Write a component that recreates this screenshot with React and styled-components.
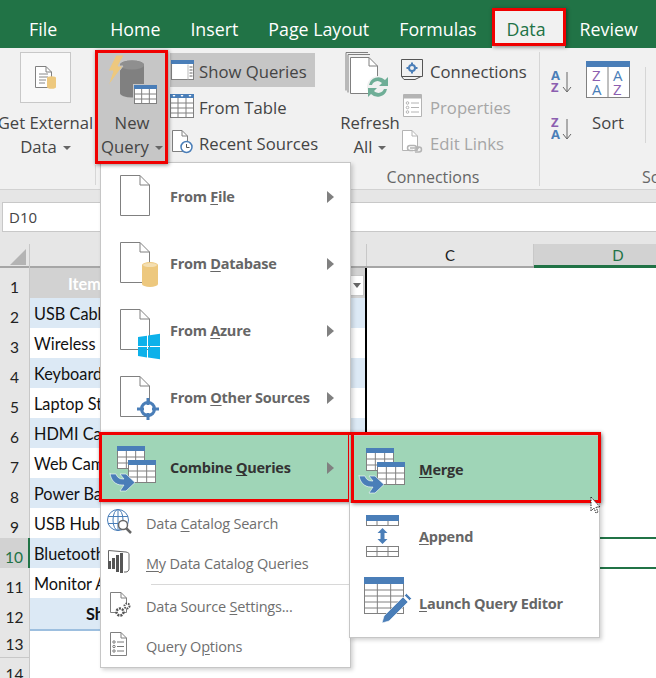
import React from "react";
import styled, { createGlobalStyle, css } from "styled-components";

const Global = createGlobalStyle`
  html, body { margin: 0; padding: 0; background: #fff; }
  #root { width: 656px; height: 678px; overflow: hidden; }
`;
const FONT = `"Open Sans", "Noto Sans", "Liberation Sans", sans-serif`;
const CELLFONT = `"Lato", "Open Sans", "Liberation Sans", sans-serif`;
const RED = "#f00000";

const redFrame = css`
  &::after {
    content: "";
    position: absolute;
    border: 3.5px solid ${RED};
    box-shadow: 1px 1px 4px rgba(0, 0, 0, 0.45);
    pointer-events: none;
    z-index: 5;
  }
`;

const Page = styled.div`
  position: relative; width: 656px; height: 678px; overflow: hidden;
  font-family: ${FONT}; background: #fff;
`;
const TabBar = styled.div`
  height: 48px; background: #217346; display: flex; align-items: flex-end; padding-left: 14px;
`;
const Tab = styled.div`
  position: relative; height: 39px; padding: 0 15px; box-sizing: border-box;
  display: flex; align-items: center; white-space: nowrap;
  font-size: 17.8px; color: #fff; margin-right: ${p => p.$gap || 0}px;
  ${p => p.$active && css`
    padding-right: 19px;
    background: #f1f1f1; color: #217346;
    ${redFrame}
    &::after { left: 0; right: -1px; top: -1px; bottom: 2px; }
  `}
`;
const Ribbon = styled.div`
  height: 141px; background: #f1f1f1; border-bottom: 1px solid #d2d2d2;
  display: flex; overflow: hidden;
`;
const Group = styled.div`
  width: ${p => p.$w}px; flex: none; display: flex; flex-direction: column; padding-top: 4px; box-sizing: border-box;
`;
const GroupBody = styled.div`
  height: 114px; display: flex; padding-left: ${p => p.$pad || 0}px;
`;
const GroupLabel = styled.div`
  height: 22px; line-height: 22px; font-size: 16px; color: #666; white-space: nowrap;
  text-align: ${p => (p.$left ? "left" : "center")};
  padding-left: ${p => p.$left || 0}px; padding-right: ${p => p.$right || 0}px;
`;
const VRule = styled.div`
  width: 1px; flex: none; background: #d6d6d6; align-self: stretch; margin: ${p => p.$m};
`;
const BigButton = styled.div`
  width: ${p => p.$w}px; flex: none; height: 110px; display: flex; flex-direction: column; align-items: center;
  color: #444; font-size: 16.7px; position: relative;
  ${p => p.$pressed && css`
    background: #c6c6c6;
    ${redFrame}
    &::after { left: -3px; right: -2px; top: -2px; bottom: -2px; }
  `}
`;
const IconBox = styled.div`
  height: 59px; box-sizing: border-box; padding-top: ${p => p.$top || 0}px; flex: none;
  display: flex; align-items: flex-start; justify-content: center; width: 100%;
`;
const OutlineBox = styled.div`
  width: 51px; height: 51px; box-sizing: border-box; background: #f8f8f8; border: 1px solid #c8c8c8;
  display: flex; align-items: center; justify-content: center;
`;
const BigLine = styled.div`
  height: 24px; line-height: 24px; white-space: nowrap; display: flex; align-items: center; gap: 6px;
`;
const Caret = styled.span`
  width: 0; height: 0; border-left: 4px solid transparent; border-right: 4px solid transparent;
  border-top: 4px solid #666; margin-top: 2px;
`;
const SmallColumn = styled.div`
  display: flex; flex-direction: column; margin-left: ${p => p.$ml || 0}px; width: ${p => p.$w}px; flex: none;
`;
const SmallButton = styled.div`
  height: 34px; margin: 1px 0; display: flex; align-items: center; gap: 5px; white-space: nowrap;
  font-size: 16.7px; color: ${p => (p.$disabled ? "#a6a6a6" : "#444")};
  background: ${p => (p.$on ? "#c6c6c6" : "transparent")};
`;
const SmallIcon = styled.div`
  width: 24px; height: 26px; flex: none; display: flex; align-items: center; justify-content: center;
`;
const SmallLabel = styled.span`padding-top: 2px;`;
const SortColumn = styled.div`
  width: 35px; flex: none; display: flex; flex-direction: column; gap: 21px; padding-top: 17px;
`;
const FormulaBar = styled.div`
  height: 54px; box-sizing: border-box; background: #e6e6e6; padding: 12px 0 12px 2px;
`;
const NameBox = styled.div`
  height: 30px; box-sizing: border-box; background: #fff; border: 1px solid #c8c8c8; border-right: 0;
  line-height: 28px; padding-left: 6px; font-size: 15px; color: #444;
`;
const ColHeads = styled.div`
  display: grid; grid-template-columns: 30px 337px 167px 169px; height: 24px; background: #e6e6e6;
  box-sizing: border-box; border-bottom: 2px solid #a6a6a6;
`;
const Corner = styled.div`
  position: relative; border-right: 1px solid #c8c8c8;
  &::after { content: ""; position: absolute; right: 3px; bottom: 3px; width: 0; height: 0;
    border-left: 16px solid transparent; border-bottom: 16px solid #b4b4b4; }
`;
const ColHead = styled.div`
  display: flex; align-items: center; justify-content: center; font-size: 15px; font-family: ${CELLFONT};
  color: ${p => (p.$on ? "#217346" : "#222")}; border-right: 1px solid #c8c8c8; box-sizing: border-box; height: ${p => (p.$on ? 24 : 22)}px;
  ${p => p.$on && css`background: #d2d2d2; border-bottom: 3px solid #217346;`}
`;
const Row = styled.div`
  display: grid; grid-template-columns: 30px 337px 167px 169px; height: 30px;
`;
const RowHead = styled.div`
  box-sizing: border-box; border-bottom: 1px solid #c8c8c8; background: ${p => (p.$on ? "#d2d2d2" : "#e6e6e6")};
  border-right: ${p => (p.$on ? "2px solid #217346" : "1px solid #c8c8c8")};
  color: ${p => (p.$on ? "#217346" : "#222")}; display: flex; align-items: flex-end; justify-content: center;
  font-family: ${CELLFONT}; font-size: 15.5px; padding-bottom: 4px;
`;
const Cell = styled.div`
  position: relative; box-sizing: border-box; font-family: ${CELLFONT}; font-size: 16.3px; color: #111;
  padding: 1px 4px 0; line-height: 30px; white-space: nowrap;
  background: ${p => (p.$fill === "head" ? "#d2d2d2" : p.$fill ? "#dce9f5" : "#fff")};
  border-bottom: 2px solid ${p => (p.$plain ? "#9dbfdf" : "#000")};
  border-right: 2px solid #000;
  ${p => p.$head && css`color: #fff; font-weight: 700; padding-left: 38px;`}
  ${p => p.$total && css`font-weight: 700; padding-left: 56px;`}
`;
const FilterBtn = styled.div`
  position: absolute; right: 1px; top: 7px; width: 15px; height: 21px; box-sizing: border-box;
  background: #fff; border: 1px solid #c8c8c8; display: flex; align-items: center; justify-content: center;
  &::after { content: ""; border-left: 4px solid transparent; border-right: 4px solid transparent; border-top: 5px solid #666; }
`;
const EmptyCell = styled.div`
  box-sizing: border-box;
  ${p => p.$selected && css`border-top: 2px solid #217346; border-bottom: 2px solid #217346; margin: -1px 0; height: 32px;`}
`;
const Menu = styled.div`
  position: absolute; left: ${p => p.$x}px; top: ${p => p.$y}px; width: ${p => p.$w}px; z-index: 3;
  box-sizing: border-box; background: #fff; border: 1px solid #c6c6c6; padding: ${p => p.$pad};
  box-shadow: 2px 2px 4px rgba(0, 0, 0, 0.18); color: #666;
`;
const BigItem = styled.div`
  position: relative; height: 67px; display: flex; align-items: center; padding-left: 14px;
  font-size: 14.5px; font-weight: 700; white-space: nowrap; letter-spacing: -0.25px;
  ${p => p.$gapped && css`margin: 3px 0 2px;`}
  svg { flex: none; margin-right: 5px; overflow: visible; }
  ${p => p.$hot && css`
    color: #333; background: #9fd5b7;
    ${redFrame}
    &::after { ${p.$frame} }
  `}
`;
const SmallItem = styled.div`
  height: 40px; display: flex; align-items: center; padding-left: 6px;
  font-size: 14.5px; white-space: nowrap; color: #6f6f6f; letter-spacing: -0.2px;
`;
const SmallSlot = styled.div`
  width: 39px; height: 32px; flex: none; display: flex; align-items: center; padding-bottom: 2px; box-sizing: border-box;
`;
const MenuRule = styled.div`
  height: 1px; margin: 1px 0 1px 50px; background: #d8d8d8;
`;
const Key = styled.span`text-decoration: underline; text-underline-offset: 2px;`;
const Arrow = styled.span`
  position: absolute; right: 16px; top: 50%; margin-top: -6px; width: 0; height: 0;
  border-top: 6px solid transparent; border-bottom: 6px solid transparent; border-left: 7px solid #808080;
`;
const Pointer = styled.svg`
  position: absolute; left: 590px; top: 496px; z-index: 6;
`;

const B = "#4a7eb8", G = "#808080", Y = "#edc87e";

const MiniTable = ({ x, y, w = 28, h = 23, head = 5, cols = 3, rows = 3, stroke = G }) => {
  const ls = [];
  for (let i = 1; i < cols; i++) ls.push(<line key={"c" + i} x1={x + (w * i) / cols} x2={x + (w * i) / cols} y1={y + head} y2={y + h} stroke={stroke} />);
  for (let i = 1; i < rows; i++) { const yy = y + head + ((h - head) * i) / rows; ls.push(<line key={"r" + i} x1={x} x2={x + w} y1={yy} y2={yy} stroke={stroke} />); }
  return (
    <g>
      <rect x={x + 0.5} y={y + 0.5} width={w - 1} height={h - 1} fill="#fff" stroke={stroke} />
      {ls}
      <rect x={x} y={y} width={w} height={head} fill={B} />
    </g>
  );
};
const PageShape = ({ x = 5, y = 3, w = 30, h = 41, f = 10, c = G }) => (
  <g fill="none" stroke={c}>
    <path d={`M${x + .5} ${y + .5}H${x + w - f}L${x + w - .5} ${y + f}V${y + h - .5}H${x + .5}Z`} fill="#fff" />
    <path d={`M${x + w - f} ${y + .5}V${y + f}H${x + w - .5}`} />
  </g>
);
const FileIcon = () => <svg width="50" height="50"><PageShape /></svg>;
const DbIcon = () => (
  <svg width="50" height="50"><PageShape />
    <path d="M27 26a8 3 0 0 1 16 0v19a8 3 0 0 1-16 0z" fill={Y} />
    <ellipse cx="35" cy="26" rx="7" ry="2" fill="#f4dfb2" />
  </svg>
);
const AzureIcon = () => (
  <svg width="50" height="50"><PageShape />
    <path d="M23 31l9-1.3v10.3h-9zM33 29.5l12-1.8v12.3h-12zM23 41h9v10.4l-9-1.3zM33 41h12v12.3l-12-1.8z" fill="#0db1ea" />
  </svg>
);
const OtherIcon = () => (
  <svg width="50" height="50"><PageShape />
    <circle cx="33" cy="36" r="6.5" fill="#fff" stroke={B} strokeWidth="3" />
    <path d="M33 25v7M33 40v7M22 36h7M37 36h7" stroke={B} strokeWidth="3" />
  </svg>
);
const CombineIcon = () => (
  <svg width="50" height="50">
    <MiniTable x={2} y={3} />
    <MiniTable x={13} y={17} />
    <path d="M-5 31h6c1 3 3 5 7 5h1l-4-5h6l9 8.500-9 8.500h-6l4-6h-2c-7 0-11-5-12-11.500z" fill={B} stroke="#fff" strokeWidth=".6" />
  </svg>
);
const AppendIcon = () => (
  <svg width="50" height="50">
    <MiniTable x={2} y={3} w={33} h={11} head={6} rows={1} />
    <rect x="2.500" y="34.500" width="32" height="10" fill="#fff" stroke={G} />
    <path d="M2 39.500h33M13 35v10M24 35v10" stroke={G} />
    <path d="M18.500 16l5 5h-3v6h3l-5 5-5-5h3v-6h-3z" fill={B} />
  </svg>
);
const EditorIcon = () => (
  <svg width="50" height="50">
    <MiniTable x={0} y={-2} w={40} h={37} head={7} rows={5} />
    <path d="M20 37l19-19 5 5-19 19-7 2zM40.500 16.500l2-2 5 5-2 2z" fill={B} stroke="#fff" strokeWidth=".6" />
  </svg>
);
const GlobeIcon = () => (
  <svg width="26" height="26" fill="none">
    <g stroke={B}>
      <circle cx="11" cy="11" r="10.500" />
      <ellipse cx="11" cy="11" rx="5" ry="10.500" />
      <path d="M11 .5v21M1 7.500h20M1 14.500h20" />
    </g>
    <circle cx="16" cy="16" r="4.500" fill="#fff" stroke="#666" strokeWidth="1.500" />
    <path d="M19 19l5 5" stroke="#666" strokeWidth="2.500" />
  </svg>
);
const BarsIcon = () => (
  <svg width="24" height="26" fill="none">
    <path d="M1.500 12V1.500L19 3c2 .5 3 1 3 2v15c0 1.500-1.500 3-3 3h-2" stroke="#666" />
    <path d="M1 12h3v8H1zM5 9h3v11H5zM9 6h3v17H9zM13 4h3v20h-3z" fill="#555" />
  </svg>
);
const GearPageIcon = () => (
  <svg width="24" height="28" fill="none">
    <PageShape x={3} y={1} w={17} h={21} f={6} />
    <circle cx="13" cy="21" r="3.500" fill="#fff" stroke="#555" strokeWidth="2.500" strokeDasharray="2 1" />
    <circle cx="20" cy="15" r="2.500" fill="#fff" stroke="#555" strokeWidth="2" strokeDasharray="1.500 1" />
  </svg>
);
const OptionsIcon = () => (
  <svg width="24" height="28" fill="none">
    <PageShape x={3} y={1} w={17} h={24} f={6} />
    <g stroke="#777">
      <circle cx="7" cy="11" r="1.200" /><circle cx="7" cy="15.500" r="1.200" /><circle cx="7" cy="20" r="1.200" />
      <path d="M10 11h7M10 15.500h7M10 20h7" />
    </g>
  </svg>
);
const ExternalIcon = () => (
  <svg width="24" height="26">
    <PageShape x={1} y={1} w={17} h={22} f={6} />
    <path d="M5 9h9M5 12h9M5 15h7M5 18h6" stroke="#888" />
    <path d="M13 13a4.500 1.800 0 0 1 9 0v9a4.500 1.800 0 0 1-9 0z" fill={Y} />
  </svg>
);
const QueryIcon = () => (
  <svg width="68" height="56">
    <path d="M22 13a12 4.500 0 0 1 24 0v28a12 4.500 0 0 1-24 0z" fill="#808080" />
    <ellipse cx="34" cy="13" rx="12" ry="4.500" fill="#8f8f8f" />
    <path d="M18 3h8l-6 11h5L10 34l5-15h-5z" fill={Y} stroke="#c6c6c6" strokeWidth="1" />
    <rect x="35" y="32" width="25" height="21" fill="#c6c6c6" />
    <MiniTable x={36} y={33} w={23} h={19} head={4} />
  </svg>
);
const ShowIcon = () => (
  <svg width="23" height="21">
    <rect x=".5" y=".5" width="22" height="19" fill="#fff" stroke={G} />
    <rect width="23" height="4" fill={B} />
    <path d="M17 4.500v15" stroke="#bbb" />
    <path d="M18.500 7h3M18.500 10h3M18.500 13h3M18.500 16h3" stroke="#666" />
  </svg>
);
const FromTableIcon = () => (
  <svg width="24" height="24">
    <MiniTable x={0} y={0} w={24} h={24} head={4} rows={4} />
    <path d="M2.500 1l1.500 2 1.500-2zM10.500 1l1.500 2 1.500-2zM18.500 1l1.500 2 1.500-2z" fill="#fff" />
  </svg>
);
const RecentIcon = () => (
  <svg width="24" height="24" fill="none">
    <PageShape x={2} y={0} w={16} h={22} f={6} />
    <circle cx="16.500" cy="17" r="5.500" fill="#fff" stroke={B} strokeWidth="1.500" />
    <path d="M16.500 14v3.500h3" stroke="#555" />
  </svg>
);
const RefreshIcon = () => (
  <svg width="50" height="50" fill="none">
    <path d="M1 .5h22M1 .5v38M3 2.500h22M3 2.500v38" stroke={G} />
    <PageShape x={5} y={5} w={28} h={37} f={9} />
    <circle cx="33" cy="35" r="11" fill="#f1f1f1" />
    <path d="M24 33a9.500 9.500 0 0 1 16-5l3-3v9h-9l3-3a6 6 0 0 0-10 2zM42 37a9.500 9.500 0 0 1-16 5l-3 3v-9h9l-3 3a6 6 0 0 0 10-2z" fill="#6fae97" />
  </svg>
);
const ConnIcon = () => (
  <svg width="24" height="22" fill="none">
    <path d="M.5.5h21v17H.5zM3 20.500h11l6-3M.5 17.500L3 20.500" stroke="#555" />
    <circle cx="11" cy="9" r="3" stroke={B} strokeWidth="2" />
    <path d="M11 3.500v2M11 12.500v2M5.500 9h2M14.500 9h2" stroke={B} strokeWidth="2" />
  </svg>
);
const PropsIcon = () => (
  <svg width="20" height="24" fill="none" stroke="#b4b4b4">
    <path d="M.5.500h18v22H.5z" fill="#fff" />
    <path d="M0 2h19M0 3.500h19" strokeWidth="2" />
    <circle cx="4.500" cy="9" r="1.300" /><circle cx="4.500" cy="13.500" r="1.300" /><circle cx="4.500" cy="18" r="1.300" />
    <path d="M8 9h8M8 13.500h8M8 18h8" />
  </svg>
);
const LinksIcon = () => (
  <svg width="24" height="24" fill="none">
    <PageShape x={1} y={0} w={16} h={21} f={6} c="#b4b4b4" />
    <path d="M9 18h9M12 20.500H9a2.500 2.500 0 0 1 0-5h4a2.500 2.500 0 0 1 0 5M15 17h3a2.500 2.500 0 0 1 0 5h-4" stroke="#b4b4b4" strokeWidth="1.500" />
  </svg>
);
const letter = { fontFamily: FONT, fontWeight: 700, fontSize: 13 };
const SortAZ = ({ flip }) => (
  <svg width="22" height="26" style={{ display: "block" }}>
    <text x="0" y="11" fill={flip ? "#8c5fb0" : B} style={letter}>{flip ? "Z" : "A"}</text>
    <text x="0" y="23" fill={flip ? B : "#8c5fb0"} style={letter}>{flip ? "A" : "Z"}</text>
    <path d="M16 3v19M12 18l4 5 4-5" fill="none" stroke="#666" />
  </svg>
);
const SortBig = () => (
  <svg width="44" height="38">
    <rect x=".5" y=".5" width="43" height="36" fill="#fff" stroke={G} />
    <rect width="44" height="6" fill={B} />
    <path d="M22 6v31" stroke={G} />
    <g style={{ fontFamily: FONT, fontSize: 15 }}>
      <text x="6" y="20" fill="#8c5fb0">Z</text><text x="6" y="34" fill={B}>A</text>
      <text x="27" y="20" fill={B}>A</text><text x="27" y="34" fill="#8c5fb0">Z</text>
    </g>
  </svg>
);

const items = ["USB Cable", "Wireless Mouse", "Keyboard", "Laptop Stand", "HDMI Cable", "Web Camera", "Power Bank", "USB Hub", "Bluetooth Speaker", "Monitor Arm"];

export default function App() {
  return (
    <Page>
      <Global />
      <TabBar>
        <Tab $gap={23}>File</Tab>
        <Tab>Home</Tab>
        <Tab>Insert</Tab>
        <Tab>Page Layout</Tab>
        <Tab>Formulas</Tab>
        <Tab $active>Data</Tab>
        <Tab>Review</Tab>
      </TabBar>
      <Ribbon>
        <Group $w={95}>
          <GroupBody>
            <BigButton $w={91}>
              <IconBox><OutlineBox><ExternalIcon /></OutlineBox></IconBox>
              <BigLine>Get External</BigLine>
              <BigLine>Data <Caret /></BigLine>
            </BigButton>
          </GroupBody>
        </Group>
        <VRule $m="117px 0 4px" />
        <Group $w={235}>
          <GroupBody $pad={2}>
            <BigButton $w={68} $pressed>
              <IconBox><QueryIcon /></IconBox>
              <BigLine>New</BigLine>
              <BigLine>Query <Caret /></BigLine>
            </BigButton>
            <SmallColumn $ml={4} $w={145}>
              <SmallButton $on><SmallIcon><ShowIcon /></SmallIcon><SmallLabel>Show Queries</SmallLabel></SmallButton>
              <SmallButton><SmallIcon><FromTableIcon /></SmallIcon><SmallLabel>From Table</SmallLabel></SmallButton>
              <SmallButton><SmallIcon><RecentIcon /></SmallIcon><SmallLabel>Recent Sources</SmallLabel></SmallButton>
            </SmallColumn>
          </GroupBody>
        </Group>
        <Group $w={208}>
          <GroupBody $pad={14}>
            <BigButton $w={50}>
              <IconBox><RefreshIcon /></IconBox>
              <BigLine>Refresh</BigLine>
              <BigLine>All <Caret /></BigLine>
            </BigButton>
            <SmallColumn $ml={6} $w={135}>
              <SmallButton><SmallIcon><ConnIcon /></SmallIcon><SmallLabel>Connections</SmallLabel></SmallButton>
              <SmallButton $disabled><SmallIcon><PropsIcon /></SmallIcon><SmallLabel>Properties</SmallLabel></SmallButton>
              <SmallButton $disabled><SmallIcon><LinksIcon /></SmallIcon><SmallLabel>Edit Links</SmallLabel></SmallButton>
            </SmallColumn>
          </GroupBody>
          <GroupLabel $right={4}>Connections</GroupLabel>
        </Group>
        <VRule $m="4px 0 3px" />
        <Group $w={116}>
          <GroupBody $pad={11}>
            <SortColumn>
              <SortAZ />
              <SortAZ flip />
            </SortColumn>
            <BigButton $w={44}>
              <IconBox $top={9}><SortBig /></IconBox>
              <BigLine>Sort</BigLine>
            </BigButton>
            <VRule $m="15px 0 23px 15px" />
          </GroupBody>
          <GroupLabel $left={102}>Sort &amp; Filter</GroupLabel>
        </Group>
      </Ribbon>
      <FormulaBar><NameBox>D10</NameBox></FormulaBar>
      <ColHeads>
        <Corner />
        <ColHead />
        <ColHead>C</ColHead>
        <ColHead $on>D</ColHead>
      </ColHeads>
      <Row>
        <RowHead>1</RowHead>
        <Cell $fill="head" $head>Item<FilterBtn /></Cell>
        <EmptyCell /><EmptyCell />
      </Row>
      {items.map((t, i) => (
        <Row key={t}>
          <RowHead $on={i === 8}>{i + 2}</RowHead>
          <Cell $fill={i % 2 === 0}>{t}</Cell>
          <EmptyCell />
          <EmptyCell $selected={i === 8} />
        </Row>
      ))}
      <Row>
        <RowHead>12</RowHead>
        <Cell $fill $total $plain>Shipping</Cell>
        <EmptyCell /><EmptyCell />
      </Row>
      <Row><RowHead>13</RowHead><EmptyCell /><EmptyCell /><EmptyCell /></Row>
      <Row><RowHead>14</RowHead><EmptyCell /><EmptyCell /><EmptyCell /></Row>

      <Menu $x={100} $y={162} $w={251} $pad="0 0 1px">
        <BigItem><FileIcon />From&nbsp;<Key>F</Key>ile<Arrow /></BigItem>
        <BigItem><DbIcon />From&nbsp;<Key>D</Key>atabase<Arrow /></BigItem>
        <BigItem><AzureIcon />From&nbsp;<Key>A</Key>zure<Arrow /></BigItem>
        <BigItem><OtherIcon />From&nbsp;<Key>O</Key>ther Sources<Arrow /></BigItem>
        <BigItem $hot $gapped $frame="left: -2px; right: -1px; top: -2px; bottom: -1px;"><CombineIcon />Combine&nbsp;<Key>Q</Key>ueries<Arrow /></BigItem>
        <SmallItem><SmallSlot><GlobeIcon /></SmallSlot>Data&nbsp;<Key>C</Key>atalog Search</SmallItem>
        <SmallItem><SmallSlot><BarsIcon /></SmallSlot><Key>M</Key>y Data Catalog Queries</SmallItem>
        <MenuRule />
        <SmallItem><SmallSlot><GearPageIcon /></SmallSlot>Data Source&nbsp;<Key>S</Key>ettings...</SmallItem>
        <SmallItem><SmallSlot><OptionsIcon /></SmallSlot>Query O<Key>p</Key>tions</SmallItem>
      </Menu>
      <Menu $x={349} $y={435} $w={251} $pad="0">
        <BigItem $hot $frame="left: 1px; right: -2px; top: -4px; bottom: 0px;"><CombineIcon /><Key>M</Key>erge</BigItem>
        <BigItem><AppendIcon /><Key>A</Key>ppend</BigItem>
        <BigItem><EditorIcon /><Key>L</Key>aunch Query Editor</BigItem>
      </Menu>
      <Pointer width="14" height="20" viewBox="0 0 14 20" fill="none">
        <path d="M1 1v14l3-3 2 5 2-1-2-5h4z" fill="#fff" stroke="#222" strokeDasharray="1.500 1" />
      </Pointer>
    </Page>
  );
}
